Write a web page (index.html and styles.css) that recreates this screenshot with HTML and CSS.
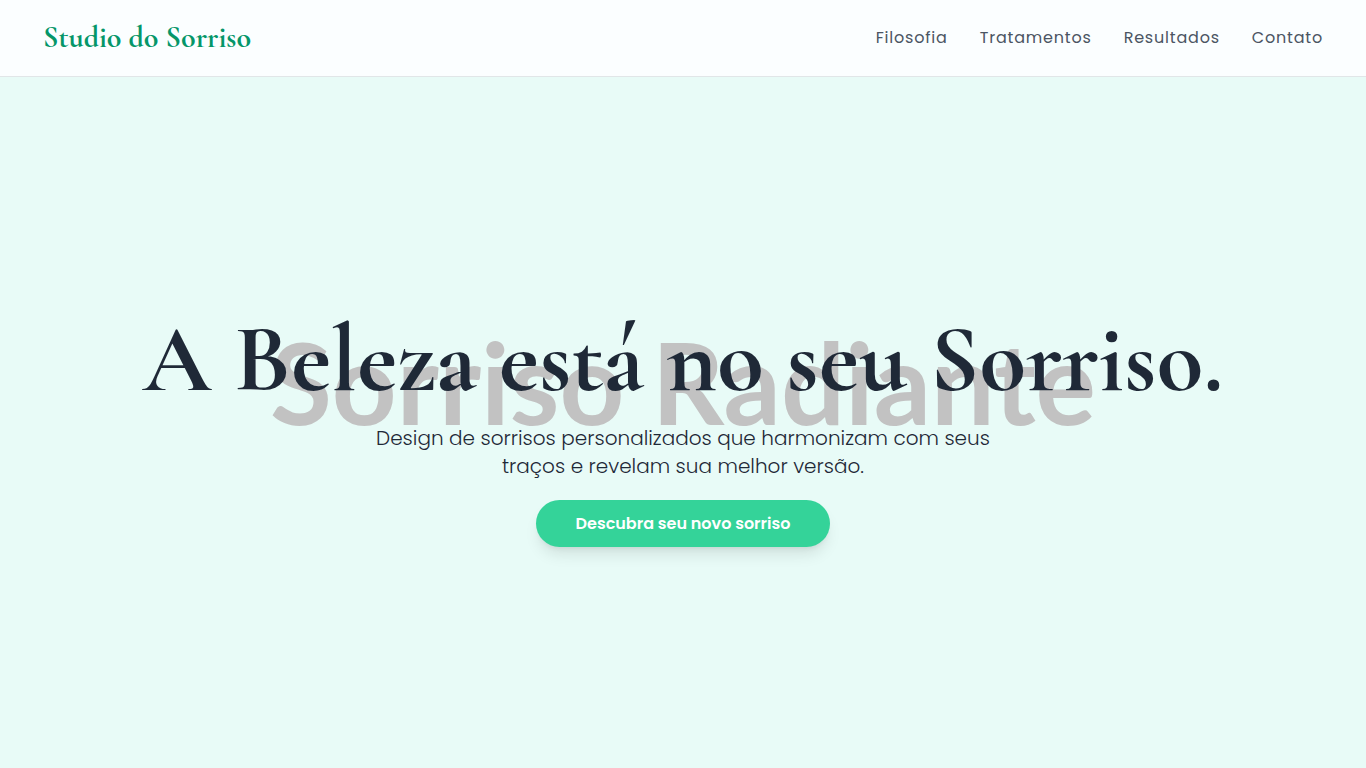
FILE: index.html
```html
<!DOCTYPE html>
<html lang="pt-BR">
<head>
<meta charset="utf-8">
<meta name="viewport" content="width=device-width, initial-scale=1">
<title>Studio do Sorriso</title>
<link rel="stylesheet" href="styles.css">
</head>
<body>
<header class="header">
  <a class="brand" href="#inicio">Studio do Sorriso</a>
  <nav class="nav">
    <a href="#filosofia">Filosofia</a>
    <a href="#tratamentos">Tratamentos</a>
    <a href="#resultados">Resultados</a>
    <a href="#contato">Contato</a>
  </nav>
</header>
<main class="hero" id="inicio">
  <div class="backdrop" aria-hidden="true">Sorriso Radiante</div>
  <div class="content">
    <h1 class="title">A Beleza está no seu Sorriso.</h1>
    <p class="lead">Design de sorrisos personalizados que harmonizam com seus traços e revelam sua melhor versão.</p>
    <a class="cta" href="#contato">Descubra seu novo sorriso</a>
  </div>
</main>
</body>
</html>
```
FILE: styles.css
```css
* { box-sizing: border-box; }

body {
  margin: 0;
  min-height: 100vh;
  display: flex;
  flex-direction: column;
  background: #e8fbf7;
  color: #1f2937;
  font-family: Poppins, "Open Sans", sans-serif;
}

a { color: inherit; text-decoration: none; }

.header {
  display: flex;
  align-items: center;
  justify-content: space-between;
  padding: 20px 43px;
  background: #fbfeff;
  border-bottom: 1px solid #e1e6e8;
}

.brand {
  color: #059669;
  font: 700 30px/36px "Cormorant Garamond", "Liberation Serif", serif;
}

.nav {
  display: flex;
  gap: 32px;
  color: #4b5563;
  font-size: 16px;
  line-height: 24px;
  letter-spacing: 0.05em;
}

.hero {
  flex: 1;
  display: grid;
  place-items: center;
  padding-top: 14px;
  overflow: hidden;
}

.backdrop, .content { grid-area: 1 / 1; }

.backdrop {
  padding-bottom: 98px;
  color: #c2c2c2;
  font: 700 113px/136px Lato, sans-serif;
  white-space: nowrap;
}

.content {
  z-index: 1;
  display: flex;
  flex-direction: column;
  align-items: center;
  text-align: center;
}

.title {
  margin: 0 0 16px;
  font: 700 96px/96px "Cormorant Garamond", "Liberation Serif", serif;
}

.lead {
  max-width: 672px;
  margin: 0 0 20px;
  font-size: 20px;
  font-weight: 300;
  line-height: 28px;
}

.cta {
  padding: 12px 40px;
  border-radius: 24px;
  background: #34d399;
  box-shadow: 0 10px 15px -3px #0000001a, 0 4px 6px -4px #0000001a;
  color: #fff;
  font-weight: 600;
  font-size: 16px;
  line-height: 23px;
}
```
